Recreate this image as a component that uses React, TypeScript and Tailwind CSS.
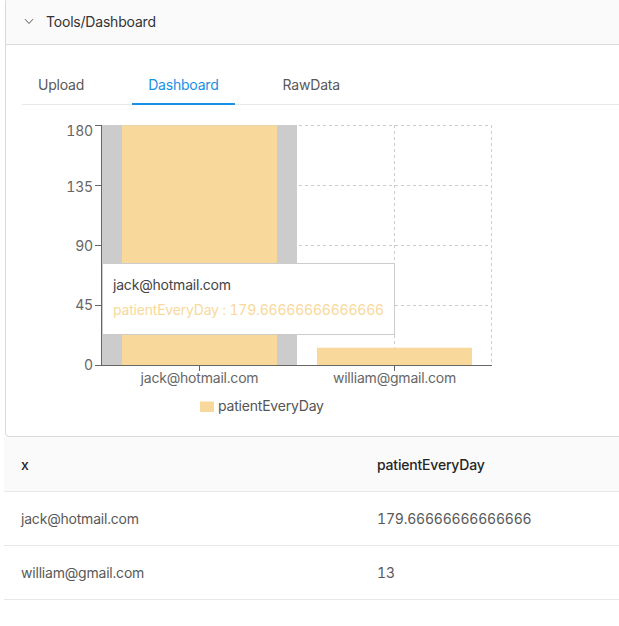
import React from 'react';

const BAR = '#f8d99b';

function Chart() {
  const hLines = [125.5, 185.5, 245.5, 305.5];
  const vLines = [199.5, 394.5, 491.5];
  const yTicks = [
    { v: '180', y: 125.5, ty: 136 },
    { v: '135', y: 185.5, ty: 192 },
    { v: '90', y: 245.5, ty: 250.5 },
    { v: '45', y: 305.5, ty: 310 },
    { v: '0', y: 365.5, ty: 370 },
  ];
  return (
    <svg width={597} height={331} viewBox="22 105 597 331" className="block" style={{ fontFamily: 'Inter, sans-serif' }}>
      <g stroke="#cccccc" strokeDasharray="3 3" fill="none">
        {hLines.map((y) => (
          <line key={'h' + y} x1={101} x2={492} y1={y} y2={y} />
        ))}
        {vLines.map((x) => (
          <line key={'v' + x} x1={x} x2={x} y1={125} y2={365} />
        ))}
      </g>
      <rect x={101} y={125} width={196} height={240} fill="#cccccc" />
      <rect x={122} y={125.4} width={155} height={239.6} fill={BAR} />
      <rect x={317} y={347.7} width={155} height={17.3} fill={BAR} />
      <g stroke="#666666" fill="none">
        <line x1={101.5} x2={101.5} y1={125} y2={366} />
        <line x1={101} x2={492} y1={365.5} y2={365.5} />
        {yTicks.map((t) => (
          <line key={'yt' + t.v} x1={95} x2={101} y1={t.y} y2={t.y} />
        ))}
        <line x1={199.5} x2={199.5} y1={365} y2={371} />
        <line x1={394.5} x2={394.5} y1={365} y2={371} />
      </g>
      <g fill="#666666" fontSize={14}>
        {yTicks.map((t) => (
          <text key={'yl' + t.v} x={93} y={t.ty} textAnchor="end">
            {t.v}
          </text>
        ))}
        <text x={199.5} y={383} textAnchor="middle">jack@hotmail.com</text>
        <text x={394.5} y={383} textAnchor="middle">william@gmail.com</text>
      </g>
      <rect x={200} y={401.5} width={14} height={10.5} fill={BAR} />
      <text x={218} y={411} fontSize={14} fill="#555555">patientEveryDay</text>
    </svg>
  );
}

export default function App() {
  return (
    <div className="w-[619px] h-[626px] overflow-hidden bg-white font-['Inter',sans-serif] text-[14px] tracking-[-0.2px] tabular-nums">
      <div className="w-[640px] ml-[5px] -mt-[2px] border border-[#d9d9d9] rounded-[4px]">
        <div className="h-[46px] bg-[#fafafa] border-b border-[#d9d9d9] rounded-t-[4px] flex items-center text-[#333333]">
          <svg className="ml-[18px] block" width={10} height={7} viewBox="0 0 10 7" fill="none">
            <path d="M1 1.2 L5 5.5 L9 1.2" stroke="#555555" strokeWidth={1} />
          </svg>
          <span className="ml-[12px] leading-[20px]">Tools/Dashboard</span>
        </div>
        <div className="relative pl-[16px] pt-[19px]">
          <div className="flex gap-[32px] border-b border-[#e8e8e8]">
            <div className="h-[40px] px-[16px] flex items-center text-[#595959]">Upload</div>
            <div className="relative h-[40px] px-[16px] flex items-center text-[#1890e6]">
              Dashboard
              <span className="absolute left-0 right-0 bottom-[-1px] h-[2px] bg-[#1890e6]" />
            </div>
            <div className="h-[40px] px-[16px] flex items-center text-[#595959]">RawData</div>
          </div>
          <Chart />
          <div className="absolute left-[96px] top-[218px] bg-white border border-[#cccccc] p-[10px] whitespace-nowrap">
            <div className="leading-[22px] text-[#444444]">jack@hotmail.com</div>
            <div className="pt-[4px] pb-[4px] leading-[20px] text-[#f8d99b]">patientEveryDay : 179.66666666666666</div>
          </div>
        </div>
      </div>
      <div className="ml-[4px] w-[640px]">
        <div className="grid grid-cols-[357px_1fr] h-[55px] items-center bg-[#fafafa] border-b border-[#e8e8e8] text-[#262626] font-[450]">
          <div className="pl-[17px]">x</div>
          <div className="pl-[16px]">patientEveryDay</div>
        </div>
        <div className="grid grid-cols-[357px_1fr] h-[54px] items-center border-b border-[#e8e8e8] text-[#595959]">
          <div className="pl-[17px]">jack@hotmail.com</div>
          <div className="pl-[16px]">179.66666666666666</div>
        </div>
        <div className="grid grid-cols-[357px_1fr] h-[54px] items-center border-b border-[#e8e8e8] text-[#595959]">
          <div className="pl-[17px]">william@gmail.com</div>
          <div className="pl-[16px]">13</div>
        </div>
      </div>
    </div>
  );
}
